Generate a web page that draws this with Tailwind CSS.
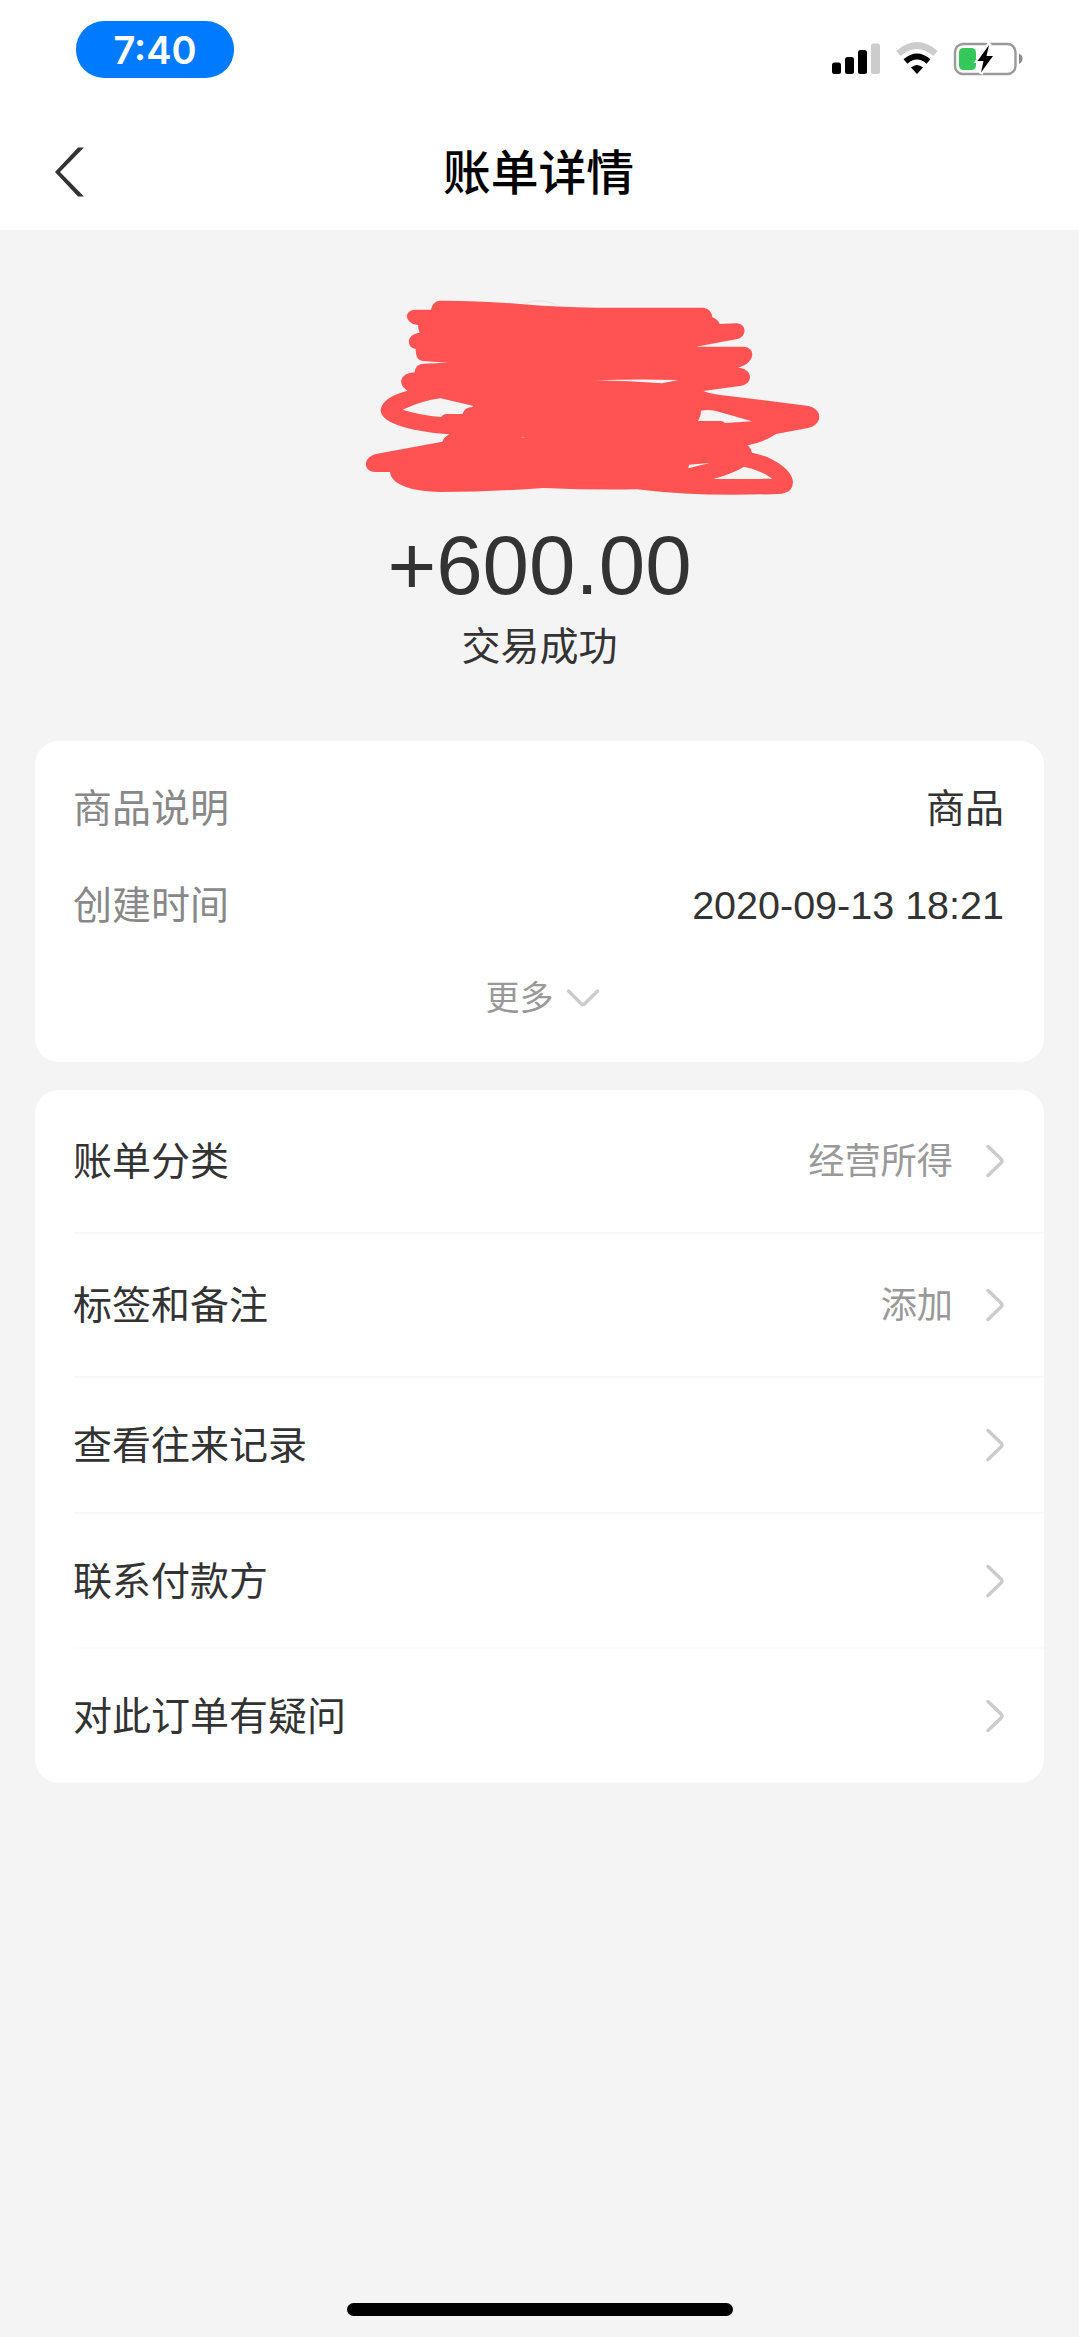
<!DOCTYPE html>
<html lang="zh-CN">
<head>
    <meta charset="UTF-8">
    <meta name="viewport" content="width=device-width, initial-scale=1.0">
    <title>账单详情</title>
    <script src="https://cdn.jsdelivr.net/npm/@tailwindcss/browser@4"></script>
</head>
<body class="bg-[#f4f4f4] font-['Liberation_Sans','Noto_Sans_CJK_SC',sans-serif] text-[#333333]">
<div class="flex flex-col w-[1079px] h-[2337px] overflow-hidden">

    <!-- Header -->
    <header class="h-[230px] bg-white shrink-0">
        <div class="flex justify-between h-[115px] pt-[21px] pl-[76px] pr-[56px]">
            <div class="flex items-center justify-center w-[158px] h-[57px] pt-[2px] rounded-[28px] bg-[#007aff] text-white text-[38px] font-semibold font-['Inter',sans-serif]">7:40</div>
            <svg class="w-[192px] h-[34px] mt-[21px]" viewBox="831 42 192 34">
                <!-- signal -->
                <rect x="832" y="62.5" width="9" height="11.5" rx="2.5"/>
                <rect x="845" y="57" width="9" height="17" rx="2.5"/>
                <rect x="858" y="50" width="9" height="24" rx="2.5"/>
                <rect x="871" y="43.5" width="9" height="30.5" rx="2.5" fill="#cccccc"/>
                <!-- wifi -->
                <path d="M898.5 53.5Q917 37.5 935.5 53.5" fill="none" stroke="#cccccc" stroke-width="6.5"/>
                <path d="M905.5 61.5Q917 51.5 928.5 61.5" fill="none" stroke="#000" stroke-width="6"/>
                <path d="M911 67.5Q917 62.5 923 67.5L917 74Z"/>
                <!-- battery -->
                <rect x="955" y="44" width="60.5" height="30" rx="8" fill="none" stroke="#9a9a9a" stroke-width="2.4"/>
                <rect x="959" y="48" width="17" height="22" rx="4.5" fill="#34c759"/>
                <path d="M1019 53.5Q1022.5 55 1022.5 58.5T1019 64Z" fill="#8c8c8c"/>
                <path d="M989.5 43.5L977.5 61H983.5L980.5 73.5L993 56.5H986.5Z" fill="#fff" stroke="#fff" stroke-width="4"/>
                <path d="M989 45L977.5 61H983.5L981 72.5L993 56H986.5Z"/>
            </svg>
        </div>
        <div class="grid grid-cols-3 items-center h-[114px]">
            <svg class="w-[30px] h-[50px] ml-[55px]" viewBox="0 0 30 50">
                <path d="M23 0.500H29L5 25L29 49.500H23L0 25Z" fill="#333333"/>
            </svg>
            <h1 class="pt-[3px] pr-[2px] text-center text-black text-[47.8px] font-medium leading-[60px]">账单详情</h1>
        </div>
    </header>

    <!-- Amount -->
    <section class="flex flex-col items-center h-[511px] pt-[50px] shrink-0">
        <svg class="w-[490px] h-[230px] ml-[111px]" viewBox="0 0 1470 690">
            <path d="M520 72Q570 52 620 75" fill="none" stroke="#e8e8e8" stroke-width="4"/>
            <path fill="#ff5252" fill-rule="evenodd" d="M268 62Q380 61 510 72Q620 82 740 83H1060Q1084 86 1087 112Q1104 118 1109 132L1160 130C1190 131 1192 170 1162 177L1038 200H1180C1220 202 1216 250 1164 263C1210 265 1210 312 1174 317L1060 333Q1090 344 1130 347L1370 377C1420 384 1420 434 1374 444L1278 462Q1240 487 1193 496Q1204 506 1206 518C1270 530 1328 570 1329 606Q1328 637 1296 641C1140 648 1000 645 860 628Q720 630 580 624C470 632 370 636 270 636C190 634 124 616 120 576H75C38 574 38 532 78 522L277 485Q282 471 298 463C200 455 92 435 92 390Q96 352 173 332Q150 319 154 300Q160 279 194 277Q196 252 220 251L294 248L218 243Q196 240 197 207C168 203 168 162 209 158Q204 148 204 135C164 132 160 92 194 89H243Q246 66 268 62Z
                M735 301Q840 303 936 310L986 300Q860 297 735 301Z
                M158 389Q215 362 272 355L368 377V381Q343 381 338 402H292Q277 403 274 411Q210 406 158 389Z
                M1053 392Q1075 387 1098 393L1206 424L1125 429Q1119 422 1110 423H1043Q1053 410 1053 392Z
                M1017 554L1078 549L1015 565Z
                M1090 597Q1150 580 1182 560Q1225 567 1267 596Z"/>
            <path d="M512 472L519 470L527 474Z" fill="#f4a0a0"/>
        </svg>
        <p class="mt-[7px] text-[83.5px] leading-[96px]">+600.00</p>
        <p class="mt-[11px] text-[39px] leading-[46px]">交易成功</p>
    </section>

    <!-- Order info -->
    <section class="flex flex-col h-[321px] mx-[35px] px-[39px] pt-[18px] rounded-[24px] bg-white shrink-0">
        <div class="flex items-center justify-between h-[97px] pt-[3px] pr-px text-[39px]">
            <span class="-ml-px text-[#888888]">商品说明</span>
            <span>商品</span>
        </div>
        <div class="flex items-center justify-between h-[97px] pt-[3px] pr-px text-[39px]">
            <span class="-ml-px text-[#888888]">创建时间</span>
            <span class="text-[39.5px]">2020-09-13 18:21</span>
        </div>
        <div class="flex items-center justify-center gap-[12px] h-[90px] pl-[6px] text-[34px] text-[#999999]">
            <span>更多</span>
            <svg class="w-[34px] h-[20px]" viewBox="0 0 34 20">
                <path d="M2.500 3L15 15.500Q17 17.500 19 15.500L31.500 3" fill="none" stroke="#cccccc" stroke-width="3.500" stroke-linecap="round"/>
            </svg>
        </div>
    </section>

    <!-- Menu -->
    <section class="flex flex-col h-[693px] mx-[35px] mt-[28px] pl-[39px] rounded-[24px] bg-white text-[39px] shrink-0">
        <div class="flex items-center h-[144px] pr-[39px] border-b-2 border-[#f8f8f8]">
            <span class="-ml-px mr-auto pt-[2px]">账单分类</span>
            <span class="mr-[32px] pt-[2px] text-[36.2px] text-[#999999]">经营所得</span>
            <svg class="w-[20px] h-[34px]" viewBox="0 0 20 34">
                <path d="M3 2.500L16 15Q18 17 16 19L3 31.500" fill="none" stroke="#cccccc" stroke-width="3.500" stroke-linecap="round"/>
            </svg>
        </div>
        <div class="flex items-center h-[144px] pr-[39px] border-b-2 border-[#f8f8f8]">
            <span class="-ml-px mr-auto pt-[2px]">标签和备注</span>
            <span class="mr-[32px] pt-[2px] text-[36.2px] text-[#999999]">添加</span>
            <svg class="w-[20px] h-[34px]" viewBox="0 0 20 34">
                <path d="M3 2.500L16 15Q18 17 16 19L3 31.500" fill="none" stroke="#cccccc" stroke-width="3.500" stroke-linecap="round"/>
            </svg>
        </div>
        <div class="flex items-center justify-between h-[136px] pr-[39px] border-b-2 border-[#f8f8f8]">
            <span class="-ml-px pt-[2px]">查看往来记录</span>
            <svg class="w-[20px] h-[34px]" viewBox="0 0 20 34">
                <path d="M3 2.500L16 15Q18 17 16 19L3 31.500" fill="none" stroke="#cccccc" stroke-width="3.500" stroke-linecap="round"/>
            </svg>
        </div>
        <div class="flex items-center justify-between h-[135px] pr-[39px] border-b-2 border-[#fbfbfb]">
            <span class="-ml-px pt-[3px]">联系付款方</span>
            <svg class="w-[20px] h-[34px]" viewBox="0 0 20 34">
                <path d="M3 2.500L16 15Q18 17 16 19L3 31.500" fill="none" stroke="#cccccc" stroke-width="3.500" stroke-linecap="round"/>
            </svg>
        </div>
        <div class="flex items-center justify-between h-[134px] pr-[39px]">
            <span class="-ml-px pt-[3px]">对此订单有疑问</span>
            <svg class="w-[20px] h-[34px]" viewBox="0 0 20 34">
                <path d="M3 2.500L16 15Q18 17 16 19L3 31.500" fill="none" stroke="#cccccc" stroke-width="3.500" stroke-linecap="round"/>
            </svg>
        </div>
    </section>

    <!-- Home indicator -->
    <div class="w-[386px] h-[13px] mt-auto mb-[21px] mx-auto rounded-full bg-black shrink-0"></div>
</div>
</body>
</html>
